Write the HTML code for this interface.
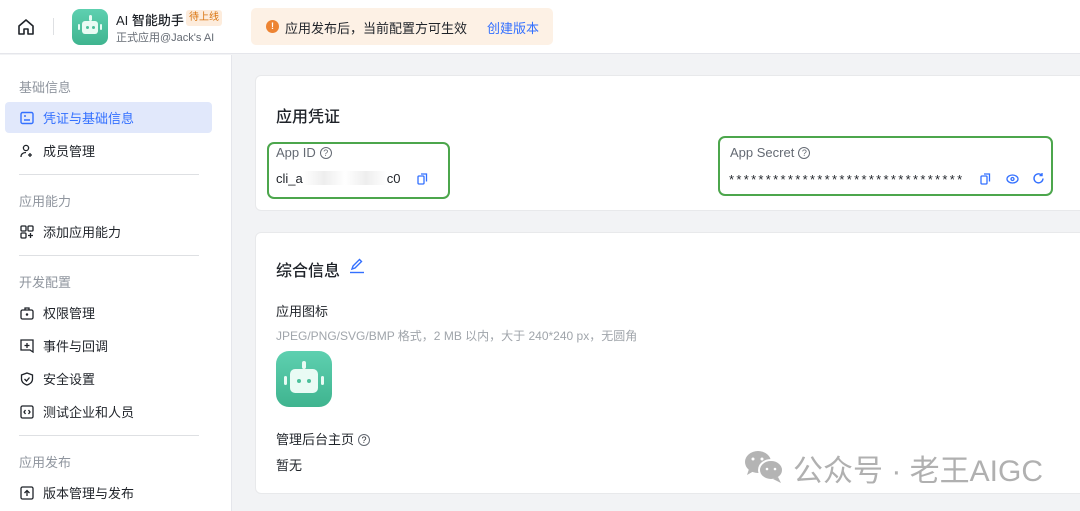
<!DOCTYPE html>
<html><head><meta charset="utf-8"><style>
*{box-sizing:border-box;margin:0;padding:0}
body{width:1080px;height:511px;overflow:hidden;background:#f2f3f5;font-family:"Liberation Sans","Noto Sans CJK SC",sans-serif;color:#1f2329;position:relative}
.hdr{position:absolute;left:0;top:0;width:1080px;height:54px;background:#fff;border-bottom:1px solid #e5e6eb}
.side{position:absolute;left:0;top:55px;width:232px;height:456px;background:#fff;border-right:1px solid #e5e6eb}
.grp{position:absolute;left:19px;font-size:13px;color:#8f959e}
.it{position:absolute;left:5px;width:207px;height:31px;font-size:13px;display:flex;align-items:center;padding-left:15px;border-radius:4px}
.it svg{margin-right:9px}
.it.act{background:#e1e8fb;color:#3370ff}
.hr{position:absolute;left:19px;width:180px;height:1px;background:#dee0e3}
.card{position:absolute;left:255px;width:840px;background:#fff;border-radius:6px;border:1px solid #e8e9eb}
.gb{position:absolute;border:2px solid #4ca64c;border-radius:7px}
.lbl{font-size:13px;color:#646a73}
.q{display:inline-block;width:12px;height:12px;border:1px solid #646a73;border-radius:50%;font-size:9px;line-height:10px;text-align:center;vertical-align:1px;margin-left:4px}
</style></head><body>
<div class="hdr">
<svg style="position:absolute;left:17px;top:18px" width="18" height="18" viewBox="0 0 18 18" fill="none" stroke="#1f2329" stroke-width="1.6"><path d="M2 8L9 2l7 6v8H11v-5H7v5H2z" stroke-linejoin="round"/></svg>
<div style="position:absolute;left:53px;top:18px;width:1px;height:17px;background:#dee0e3"></div>
<div style="position:absolute;left:72px;top:9px;width:36px;height:36px;border-radius:8px;background:linear-gradient(#5ed0b0,#3fb48f)">
<div style="position:absolute;left:10px;top:12px;width:16px;height:13px;background:#e9fbf4;border-radius:3px"></div>
<div style="position:absolute;left:17px;top:6px;width:3px;height:6px;background:#e9fbf4;border-radius:2px"></div>
<div style="position:absolute;left:14px;top:17px;width:3px;height:3px;background:#4cc09b;border-radius:50%"></div>
<div style="position:absolute;left:20px;top:17px;width:3px;height:3px;background:#4cc09b;border-radius:50%"></div>
<div style="position:absolute;left:6px;top:15px;width:2px;height:6px;background:#e9fbf4;border-radius:1px"></div>
<div style="position:absolute;left:28px;top:15px;width:2px;height:6px;background:#e9fbf4;border-radius:1px"></div>
</div>
<div style="position:absolute;left:116px;top:10px;font-size:13px;font-weight:500;white-space:nowrap">AI 智能助手</div>
<div style="position:absolute;left:186px;top:10px;font-size:10px;color:#d9730d;background:#fdecdc;padding:1px 3px;border-radius:3px;line-height:14px">待上线</div>
<div style="position:absolute;left:116px;top:29px;font-size:11px;color:#646a73">正式应用@Jack's AI</div>
<div style="position:absolute;left:251px;top:8px;width:302px;height:37px;background:#fdf1e5;border-radius:5px">
<div style="position:absolute;left:15px;top:12px;width:13px;height:13px;border-radius:50%;background:#ed8433;color:#fff;font-size:9px;font-weight:bold;text-align:center;line-height:13px">!</div>
<div style="position:absolute;left:34px;top:10px;font-size:13px;color:#1f2329">应用发布后，当前配置方可生效</div>
<div style="position:absolute;left:236px;top:10px;font-size:13px;color:#3370ff">创建版本</div>
</div>
</div>
<div class="side">
<div class="grp" style="top:22px">基础信息</div>
<div class="it act" style="top:47px"><svg width="14" height="14" viewBox="0 0 14 14" fill="none" stroke="#3370ff" stroke-width="1.4"><rect x="1" y="1.5" width="12" height="11" rx="1.5"/><path d="M4 5h2M4 9h6"/></svg>凭证与基础信息</div>
<div class="it" style="top:80px"><svg width="14" height="14" viewBox="0 0 14 14" fill="none" stroke="#1f2329" stroke-width="1.3"><circle cx="6" cy="4" r="2.6"/><path d="M1 13c0-3 2-4.5 5-4.5M10 9v4M8 11h4"/></svg>成员管理</div>
<div class="hr" style="top:119px"></div>
<div class="grp" style="top:136px">应用能力</div>
<div class="it" style="top:161px"><svg width="14" height="14" viewBox="0 0 14 14" fill="none" stroke="#1f2329" stroke-width="1.3"><rect x="1" y="1" width="5" height="5" rx="1"/><rect x="8" y="1" width="5" height="5" rx="1"/><rect x="1" y="8" width="5" height="5" rx="1"/><path d="M10.5 8v5M8 10.5h5"/></svg>添加应用能力</div>
<div class="hr" style="top:200px"></div>
<div class="grp" style="top:217px">开发配置</div>
<div class="it" style="top:242px"><svg width="14" height="14" viewBox="0 0 14 14" fill="none" stroke="#1f2329" stroke-width="1.3"><rect x="1" y="4" width="12" height="9" rx="1.5"/><path d="M5 4V2h4v2"/><circle cx="7" cy="8.5" r=".6" fill="#1f2329"/></svg>权限管理</div>
<div class="it" style="top:275px"><svg width="14" height="14" viewBox="0 0 14 14" fill="none" stroke="#1f2329" stroke-width="1.3"><path d="M1 1h12v12l-3-2H1z"/><path d="M7 4v5M4.5 6.5h5"/></svg>事件与回调</div>
<div class="it" style="top:308px"><svg width="14" height="14" viewBox="0 0 14 14" fill="none" stroke="#1f2329" stroke-width="1.3"><path d="M7 1l5.5 2v4c0 3-2.5 5-5.5 6-3-1-5.5-3-5.5-6V3z"/><path d="M4.5 7l2 2 3-3.5"/></svg>安全设置</div>
<div class="it" style="top:341px"><svg width="14" height="14" viewBox="0 0 14 14" fill="none" stroke="#1f2329" stroke-width="1.3"><rect x="1" y="1" width="12" height="12" rx="1.5"/><path d="M5.5 5L4 7l1.5 2M8.5 5L10 7 8.5 9"/></svg>测试企业和人员</div>
<div class="hr" style="top:380px"></div>
<div class="grp" style="top:397px">应用发布</div>
<div class="it" style="top:422px"><svg width="14" height="14" viewBox="0 0 14 14" fill="none" stroke="#1f2329" stroke-width="1.3"><rect x="1" y="1" width="12" height="12" rx="1.5"/><path d="M7 10V4.5M4.5 7L7 4.5 9.5 7"/></svg>版本管理与发布</div>
</div>

<div class="card" style="top:75px;height:136px">
<div style="position:absolute;left:20px;top:27px;font-size:16px;font-weight:500">应用凭证</div>
</div>
<div class="gb" style="left:267px;top:142px;width:183px;height:57px"></div>
<div class="lbl" style="position:absolute;left:276px;top:145px">App ID<span class="q">?</span></div>
<div style="position:absolute;left:276px;top:171px;font-size:13px">cli_a<span style="display:inline-block;width:84px;height:14px;background:linear-gradient(90deg,#fff,#eee,#fff,#eee,#fff);vertical-align:-2px"></span>c0</div>
<svg style="position:absolute;left:417px;top:173px" width="11" height="12" viewBox="0 0 11 12" fill="none" stroke="#3370ff" stroke-width="1.3"><rect x="1" y="3" width="6" height="8" rx="1"/><path d="M4 1h5.5v7.5"/></svg>
<div class="gb" style="left:718px;top:136px;width:335px;height:60px"></div>
<div class="lbl" style="position:absolute;left:730px;top:145px">App Secret<span class="q">?</span></div>
<div style="position:absolute;left:729px;top:172px;font-size:13px;letter-spacing:2.3px;white-space:nowrap">********************************</div>
<svg style="position:absolute;left:980px;top:173px" width="11" height="12" viewBox="0 0 11 12" fill="none" stroke="#3370ff" stroke-width="1.3"><rect x="1" y="3" width="6" height="8" rx="1"/><path d="M4 1h5.5v7.5"/></svg>
<svg style="position:absolute;left:1006px;top:173px" width="13" height="12" viewBox="0 0 13 12" fill="none" stroke="#3370ff" stroke-width="1.3"><ellipse cx="6.5" cy="6" rx="5.5" ry="4"/><circle cx="6.5" cy="6" r="1.5"/></svg>
<svg style="position:absolute;left:1032px;top:172px" width="13" height="13" viewBox="0 0 13 13" fill="none" stroke="#3370ff" stroke-width="1.4"><path d="M11 6.5A4.5 4.5 0 1 1 9.5 3"/><path d="M10 1v2.5H7.5"/></svg>

<div class="card" style="top:232px;height:262px">
<div style="position:absolute;left:20px;top:24px;font-size:16px;font-weight:500">综合信息</div>
<svg style="position:absolute;left:93px;top:24px" width="17" height="17" viewBox="0 0 17 17" fill="none" stroke="#3370ff" stroke-width="1.4"><path d="M3 12l1-3 6.5-6.5 2 2L6 11z"/><path d="M1 15.5h14"/></svg>
<div style="position:absolute;left:20px;top:68px;font-size:13px;color:#1f2329">应用图标</div>
<div style="position:absolute;left:20px;top:94px;font-size:12px;color:#a0a5ab;white-space:nowrap">JPEG/PNG/SVG/BMP 格式，2 MB 以内，大于 240*240 px，无圆角</div>
<div style="position:absolute;left:20px;top:118px;width:56px;height:56px;border-radius:13px;background:linear-gradient(#5ed0b0,#3fb48f)">
<div style="position:absolute;left:14px;top:18px;width:28px;height:24px;background:#e9fbf4;border-radius:5px"></div>
<div style="position:absolute;left:26px;top:10px;width:4px;height:8px;background:#e9fbf4;border-radius:2px"></div>
<div style="position:absolute;left:21px;top:28px;width:4px;height:4px;background:#4cc09b;border-radius:50%"></div>
<div style="position:absolute;left:31px;top:28px;width:4px;height:4px;background:#4cc09b;border-radius:50%"></div>
<div style="position:absolute;left:8px;top:25px;width:3px;height:9px;background:#e9fbf4;border-radius:2px"></div>
<div style="position:absolute;left:45px;top:25px;width:3px;height:9px;background:#e9fbf4;border-radius:2px"></div>
</div>
<div style="position:absolute;left:20px;top:196px;font-size:13px">管理后台主页<span class="q">?</span></div>
<div style="position:absolute;left:20px;top:222px;font-size:13px">暂无</div>
</div>

<svg style="position:absolute;left:743px;top:449px" width="42" height="36" viewBox="0 0 42 36" fill="#b4b4b4"><ellipse cx="15" cy="13" rx="13" ry="11"/><path d="M6 20l-2 6 7-4z"/><ellipse cx="28" cy="21" rx="12" ry="10" stroke="#fff" stroke-width="2"/><path d="M35 28l3 6-8-4z"/><circle cx="10" cy="10" r="1.5" fill="#fff"/><circle cx="19" cy="10" r="1.5" fill="#fff"/><circle cx="24" cy="20" r="1.3" fill="#fff"/><circle cx="32" cy="20" r="1.3" fill="#fff"/></svg>
<div style="position:absolute;left:793px;top:446px;font-size:30px;color:#b0b0b0;white-space:nowrap">公众号 · 老王AIGC</div>
</body></html>
